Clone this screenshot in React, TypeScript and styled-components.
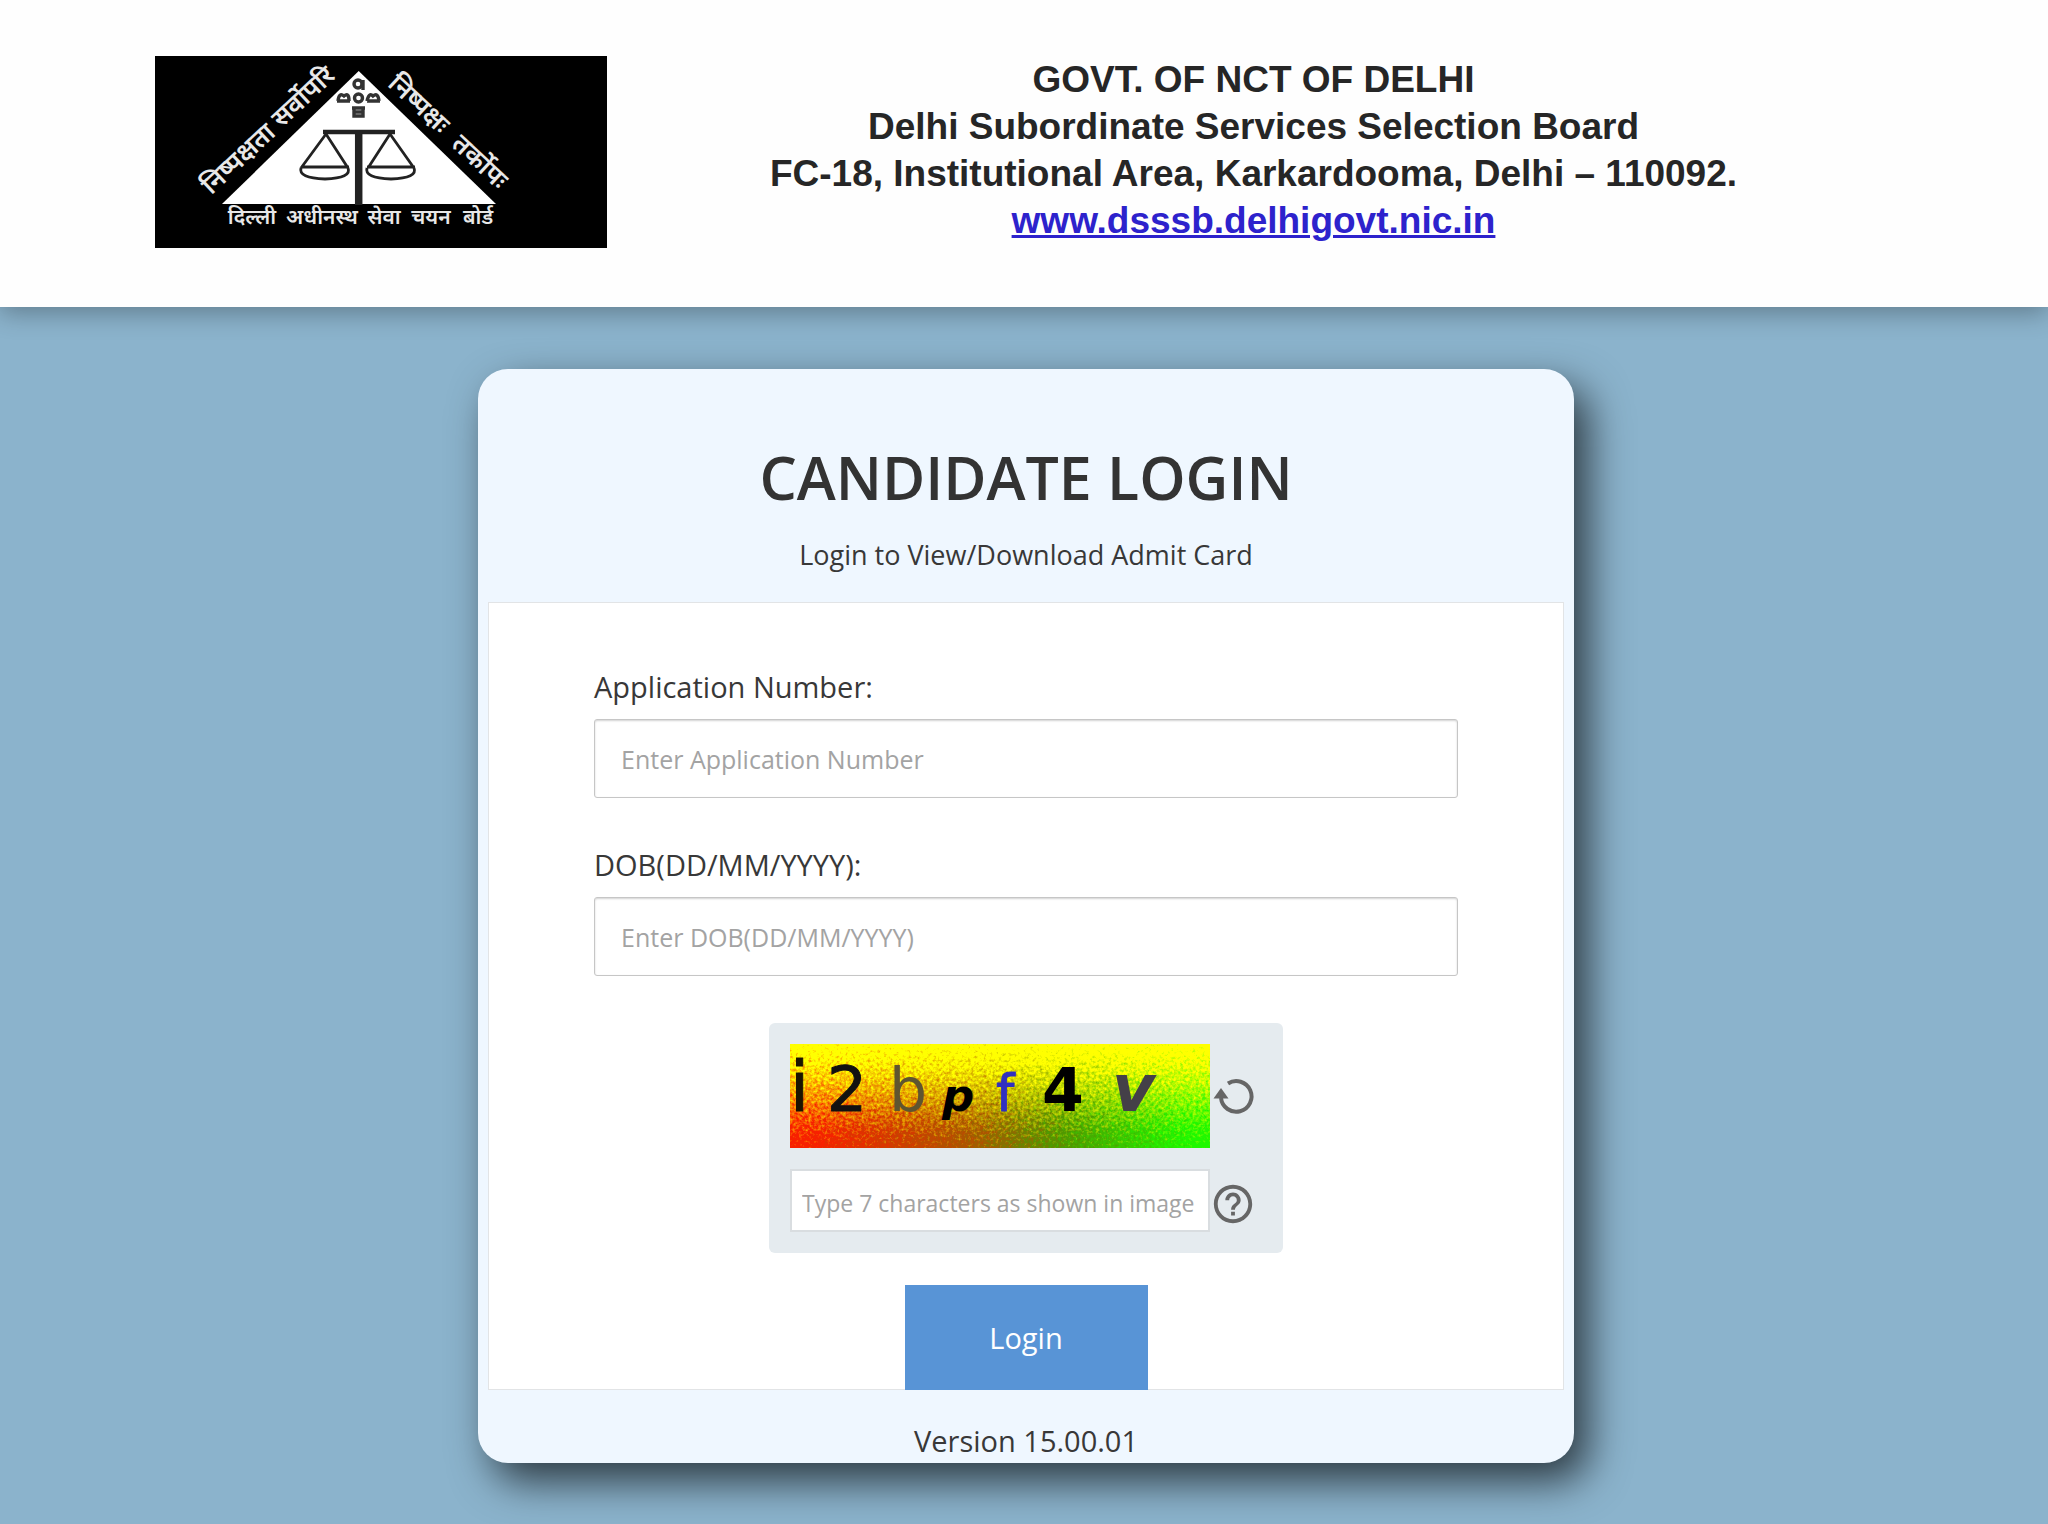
import React, { useState } from "react";
import styled, { createGlobalStyle } from "styled-components";
import { MdHelpOutline } from "react-icons/md";

const GlobalStyle = createGlobalStyle`
  *, *::before, *::after { box-sizing: border-box; }
  body {
    margin: 0;
    background: #8bb3cc;
    color: #383838;
    font-family: "Open Sans", "Noto Sans", sans-serif;
  }
  h1, p { margin: 0; }
`;

const Header = styled.header`
  display: flex;
  align-items: flex-start;
  padding: 56px 148px 59px 155px;
  background: #fefefe;
  box-shadow: 0 6px 24px rgba(0, 0, 0, 0.3);
`;

const Logo = styled.svg`
  flex: none;
  width: 452px;
  height: 192px;
  background: #000;
`;

const Address = styled.div`
  flex: 1;
  display: flex;
  flex-direction: column;
  align-items: center;
  color: #262626;
  font: 700 37px/47px "Liberation Sans", Arial, sans-serif;
  text-align: center;
`;

const SiteLink = styled.a`
  color: #2d22cc;
  text-decoration: underline;
  text-decoration-thickness: 3px;
`;

const Main = styled.main`
  display: flex;
  justify-content: center;
  padding: 62px 0 61px 4px;
`;

const Card = styled.section`
  width: 1096px;
  max-width: 100%;
  padding: 0 10px 2px;
  border-radius: 30px;
  background: #eff7ff;
  box-shadow: 14px 18px 42px rgba(0, 0, 0, 0.68);
  text-align: center;
`;

const CardHead = styled.div`
  padding: 76px 0 29px;
`;

const Title = styled.h1`
  color: #333;
  font-size: 59px;
  font-weight: 600;
  line-height: 64px;
`;

const Subtitle = styled.p`
  margin-top: 28px;
  font-size: 27px;
  line-height: 36px;
`;

const Form = styled.form`
  display: flex;
  flex-direction: column;
  align-items: center;
  padding: 64px 105px 0;
  border: 1px solid #e2e4e6;
  background: #fff;
`;

const Field = styled.div`
  display: flex;
  flex-direction: column;
  align-self: stretch;
  gap: 12px;
  margin-bottom: 47px;
  text-align: left;
`;

const Label = styled.label`
  font-size: 29px;
  line-height: 40px;
`;

const TextBox = styled.input`
  width: 100%;
  height: 79px;
  padding: 0 26px;
  border: 1px solid #c6c6c6;
  border-radius: 3px;
  background: #fff;
  color: #333;
  font: 25px/36px "Open Sans", "Noto Sans", sans-serif;
  box-shadow: inset 0 1px 2px rgba(0, 0, 0, 0.18);
  &::placeholder { color: #a3a3a3; opacity: 1; }
`;

const Captcha = styled.div`
  display: grid;
  grid-template-columns: 420px 46px;
  row-gap: 21px;
  align-items: center;
  width: 514px;
  padding: 21px;
  border-radius: 6px;
  background: #e5ebef;
`;

const CaptchaImage = styled.svg`
  display: block;
  width: 420px;
  height: 104px;
`;

const CaptchaBox = styled(TextBox)`
  height: 63px;
  padding: 4px 10px 0;
  border: 2px solid #d9dde0;
  border-radius: 0;
  box-shadow: none;
  font-size: 23px;
`;

const IconButton = styled.button`
  display: flex;
  align-items: center;
  justify-content: center;
  width: 46px;
  padding: 6px 0 0;
  border: 0;
  background: none;
  color: #666;
  cursor: pointer;
  svg { flex: none; width: 46px; height: 46px; }
`;

const LoginButton = styled.button`
  width: 243px;
  height: 105px;
  margin: 32px 0 -1px;
  border: 0;
  background: #5894d6;
  color: #fff;
  font: 29px/40px "Open Sans", "Noto Sans", sans-serif;
  cursor: pointer;
`;

const Version = styled.p`
  margin-top: 31px;
  font-size: 29px;
  line-height: 40px;
`;

const HINDI = '"Noto Sans Devanagari", "Lohit Devanagari", "Noto Sans", sans-serif';

function BoardLogo() {
  return (
    <Logo viewBox="0 0 452 192" role="img" aria-label="Board emblem">
      <path d="M203.7 15 L341 148 H67 Z" fill="#fff" />
      <g fill="none" stroke="#222" strokeWidth="2.8">
        <path d="M168 76 H240" strokeWidth="4.4" />
        <path d="M203.7 75 V149" strokeWidth="7.5" />
        <path d="M171 78 L146 112 M171 78 L193 112 M146 111 H194 M146 112 Q143 122 170 123 Q197 122 193 112" />
        <path d="M235 78 L213 112 M235 78 L259 112 M212 111 H260 M212 112 Q209 122 236 123 Q263 122 259 112" />
      </g>
      <g fill="none" stroke="#333" strokeWidth="3.4">
        <circle cx="203" cy="28" r="4" />
        <path d="M208 24 V34 M183 45 Q184 36 189 40 Q194 36 194 45 M182 45 H195 M212 45 Q214 36 218 40 Q223 36 224 45 M212 45 H225" />
        <circle cx="203.5" cy="42" r="4" />
        <path d="M197 52 H210 M199 52 V60 H208 V52 M199 56 H208" />
      </g>
      <g fill="#e8e8e8" fontFamily={HINDI} textAnchor="middle" fontWeight="600">
        <g fontSize="26">
          <text transform="translate(89 109) rotate(-43)">निष्पक्षता</text>
          <text transform="translate(154 47) rotate(-43)">सर्वोपरि</text>
          <text transform="translate(258 54) rotate(43)">निष्पक्षः</text>
          <text transform="translate(319 112) rotate(43)">तर्कोपः</text>
        </g>
        <g fontSize="21">
          <text x="97" y="168">दिल्ली</text>
          <text x="167" y="168">अधीनस्थ</text>
          <text x="229" y="168">सेवा</text>
          <text x="276" y="168">चयन</text>
          <text x="323" y="168">बोर्ड</text>
        </g>
      </g>
    </Logo>
  );
}

function CaptchaPicture() {
  return (
    <CaptchaImage viewBox="0 0 420 104" role="img" aria-label="Captcha" preserveAspectRatio="none">
      <defs>
        <linearGradient id="base" x1="0" x2="1">
          <stop offset="0.2" stopColor="#f82000" />
          <stop offset="0.46" stopColor="#a85800" />
          <stop offset="0.6" stopColor="#509800" />
          <stop offset="0.8" stopColor="#20f800" />
        </linearGradient>
        <linearGradient id="fade" x1="0" x2="0" y1="0" y2="1">
          <stop offset="0.38" stopColor="#ffff00" />
          <stop offset="0.63" stopColor="#ffff00" stopOpacity="0" />
        </linearGradient>
        <filter id="scatter" x="0" y="0" width="1" height="1" colorInterpolationFilters="sRGB">
          <feTurbulence type="fractalNoise" baseFrequency="0.32" numOctaves="3" seed="4" />
          <feDisplacementMap in="SourceGraphic" scale="95" xChannelSelector="R" yChannelSelector="G" />
        </filter>
      </defs>
      <g filter="url(#scatter)">
        <rect x="-100" y="-100" width="620" height="304" fill="url(#base)" />
        <rect x="-100" y="-100" width="620" height="304" fill="url(#fade)" />
      </g>
      <g fontFamily='"DejaVu Sans", sans-serif'>
        <text x="0" y="67" fontSize="69" fill="#1c1400" stroke="#1c1400">i</text>
        <text x="37" y="67" fontSize="63" fill="#111" stroke="#111">2</text>
        <text x="99" y="67" fontSize="60" fill="#5f5530">b</text>
        <text x="152" y="67" fontSize="45" fontWeight="700" fontStyle="italic" fill="#000">p</text>
        <text x="206" y="67" fontSize="52" fill="#3030c0" stroke="#3030c0">f</text>
        <text x="252" y="67" fontSize="60" fontWeight="700" fill="#000">4</text>
        <text x="322" y="67" fontSize="66" fontWeight="700" fontStyle="italic" fill="#444048">v</text>
      </g>
    </CaptchaImage>
  );
}

function RefreshIcon() {
  return (
    <svg viewBox="0 0 46 46" aria-hidden="true">
      <path d="M18 7.5 A15.3 15.3 0 1 1 11 22" fill="none" stroke="currentColor" strokeWidth="4" />
      <path d="M11 12 L18.5 22.5 H3.5 Z" fill="currentColor" />
    </svg>
  );
}

const fields = [
  { id: "application", label: "Application Number:", placeholder: "Enter Application Number" },
  { id: "dob", label: "DOB(DD/MM/YYYY):", placeholder: "Enter DOB(DD/MM/YYYY)" },
];

export default function App() {
  const [values, setValues] = useState<Record<string, string>>({});
  const update = (e: React.ChangeEvent<HTMLInputElement>) =>
    setValues({ ...values, [e.target.id]: e.target.value });

  return (
    <>
      <GlobalStyle />
      <Header>
        <BoardLogo />
        <Address>
          <span>GOVT. OF NCT OF DELHI</span>
          <span>Delhi Subordinate Services Selection Board</span>
          <span>FC-18, Institutional Area, Karkardooma, Delhi – 110092.</span>
          <SiteLink href="#">www.dsssb.delhigovt.nic.in</SiteLink>
        </Address>
      </Header>
      <Main>
        <Card>
          <CardHead>
            <Title>CANDIDATE LOGIN</Title>
            <Subtitle>Login to View/Download Admit Card</Subtitle>
          </CardHead>
          <Form onSubmit={(e) => e.preventDefault()}>
            {fields.map((f) => (
              <Field key={f.id}>
                <Label htmlFor={f.id}>{f.label}</Label>
                <TextBox id={f.id} placeholder={f.placeholder} value={values[f.id] ?? ""} onChange={update} />
              </Field>
            ))}
            <Captcha>
              <CaptchaPicture />
              <IconButton type="button" aria-label="Refresh captcha"><RefreshIcon /></IconButton>
              <CaptchaBox
                id="captcha"
                aria-label="Captcha text"
                placeholder="Type 7 characters as shown in image"
                value={values.captcha ?? ""}
                onChange={update}
              />
              <IconButton type="button" aria-label="Help"><MdHelpOutline /></IconButton>
            </Captcha>
            <LoginButton type="submit">Login</LoginButton>
          </Form>
          <Version>Version 15.00.01</Version>
        </Card>
      </Main>
    </>
  );
}
